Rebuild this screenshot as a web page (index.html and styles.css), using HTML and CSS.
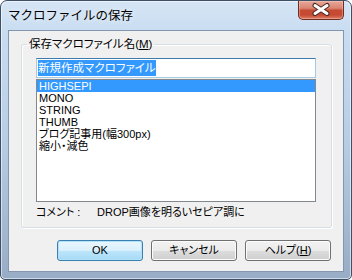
FILE: index.html
```html
<!DOCTYPE html>
<html lang="ja">
<head>
<meta charset="utf-8">
<title>マクロファイルの保存</title>
<link rel="stylesheet" href="styles.css">
</head>
<body>
<div class="window">
  <div class="titlebar">
    <span class="title">マクロファイルの保存</span>
    <button class="close" aria-label="閉じる">
      <svg width="46" height="19" viewBox="0 0 46 19">
        <path d="M17 5.5 L29 13.5 M29 5.5 L17 13.5" stroke="#4a2a24" stroke-width="5" stroke-linecap="round"/>
        <path d="M17 5.5 L29 13.5 M29 5.5 L17 13.5" stroke="#ffffff" stroke-width="3" stroke-linecap="round"/>
      </svg>
    </button>
  </div>
  <div class="client">
    <fieldset class="group">
      <legend>保存マクロファイル名(<u>M</u>)</legend>
      <div class="textbox"><span class="sel">新規作成マクロファイル</span></div>
      <ul class="listbox">
        <li class="selected">HIGHSEPI</li>
        <li>MONO</li>
        <li>STRING</li>
        <li>THUMB</li>
        <li>ブログ記事用(幅300px)</li>
        <li>縮小・減色</li>
      </ul>
      <div class="comment"><span class="clabel">コメント :</span><span>DROP画像を明るいセピア調に</span></div>
    </fieldset>
    <div class="buttons">
      <button class="btn default">OK</button>
      <button class="btn">キャンセル</button>
      <button class="btn">ヘルプ(<u>H</u>)</button>
    </div>
  </div>
</div>
</body>
</html>
```
FILE: styles.css
```css
* { box-sizing: border-box; }
html, body { margin: 0; padding: 0; }
body {
  width: 352px;
  height: 280px;
  overflow: hidden;
  background: #ffffff;
  font-family: "Liberation Sans", "Noto Sans CJK JP", sans-serif;
  font-size: 11px;
  font-feature-settings: "palt";
  color: #000;
}
.window {
  width: 352px;
  height: 280px;
  border: 1px solid #3e5068;
  border-radius: 7px 7px 5px 5px;
  background: linear-gradient(to bottom, #d6e5f5 0, #c9ddf1 30px, #b7cde4 140px, #98adc5 100%);
  box-shadow: inset 0 0 0 1px rgba(255,255,255,0.55);
  padding: 0 7px 7px;
  display: flex;
  flex-direction: column;
}
.titlebar {
  height: 29px;
  display: flex;
  align-items: flex-start;
}
.title {
  margin-top: 6px;
  line-height: 16px;
  font-family: "Noto Sans CJK JP", sans-serif;
  font-size: 12.5px;
  font-feature-settings: normal;
  text-shadow: 0 0 6px rgba(255,255,255,0.9);
}
.close {
  margin-left: auto;
  width: 46px;
  height: 19px;
  padding: 0;
  border: 1px solid #6e2c22;
  border-top: none;
  border-radius: 0 0 5px 5px;
  background: linear-gradient(to bottom, #e6a89a 0, #da8472 40%, #c74a33 52%, #c64a33 78%, #df8064 100%);
  box-shadow: inset 0 0 0 1px rgba(255,220,210,0.35);
  display: block;
}
.close svg { display: block; margin: -1px 0 0 -1px; }
.client {
  flex: 1;
  border: 1px solid #8396ad;
  background: #f0f0f0;
  display: flex;
  flex-direction: column;
}
.group {
  margin: 6px 11px 0 12px;
  padding: 7px 14px 8px 14px;
  border: 1px solid #d5dfe5;
  border-radius: 3px;
  box-shadow: inset 1px 1px 0 #ffffff, 1px 1px 0 #ffffff;
  min-width: 0;
}
.group legend {
  padding: 0 2px;
  margin-left: -9px;
  line-height: 14px;
  font-size: 11.5px;
}
.textbox {
  height: 20px;
  width: 280px;
  background: #fff;
  border: 1px solid #a4c9e3;
  border-top-color: #3d7bad;
  padding: 1px 1px;
  line-height: 16px;
}
.sel {
  display: inline-block;
  background: #3399ff;
  color: #fff;
  line-height: 16px;
  font-size: 11.5px;
}
.listbox {
  list-style: none;
  margin: 1px 0 0;
  padding: 0;
  width: 280px;
  height: 123px;
  background: #fff;
  border: 1px solid #828790;
}
.listbox li {
  height: 12px;
  line-height: 12px;
  padding-left: 2px;
  white-space: nowrap;
}
.listbox li.selected {
  background: #3399ff;
  color: #fff;
}
.comment {
  margin-top: 3px;
  line-height: 14px;
  display: flex;
}
.clabel { width: 61px; }
.buttons {
  display: flex;
  justify-content: flex-end;
  gap: 8px;
  margin: 12px 12px 0 0;
}
.btn {
  width: 86px;
  height: 21px;
  padding: 0;
  font: inherit;
  color: #000;
  border: 1px solid #707070;
  border-radius: 3px;
  background: linear-gradient(to bottom, #f2f2f2 0, #ebebeb 50%, #dddddd 50%, #cfcfcf 100%);
  box-shadow: inset 0 0 0 1px #fcfcfc;
  line-height: 17px;
}
.btn.default {
  border-color: #3c7fb1;
  background: linear-gradient(to bottom, #eaf6fd 0, #d9f0fc 50%, #bee6fd 50%, #a7d9f5 100%);
  box-shadow: inset 0 0 0 1px #aee3fa;
}
```
